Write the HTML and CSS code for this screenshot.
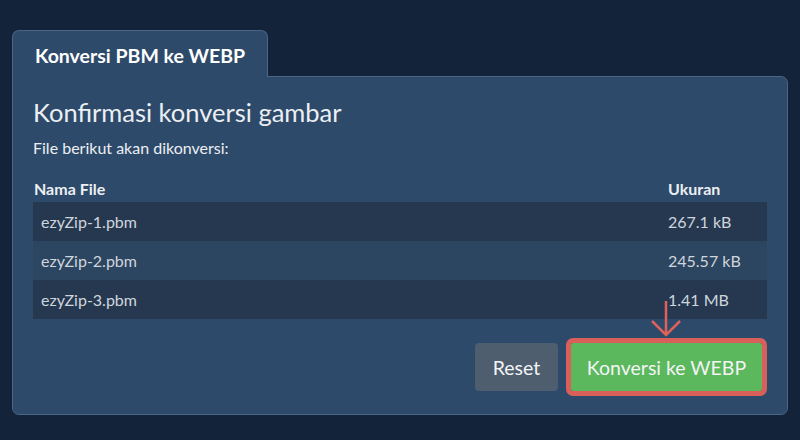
FILE: index.html
```html
<!DOCTYPE html>
<html lang="id">
<head>
<meta charset="utf-8">
<title>Konversi PBM ke WEBP</title>
<link rel="stylesheet" href="styles.css">
</head>
<body>
<div class="card">
  <div class="tabs">
    <div class="tab">Konversi PBM ke WEBP</div>
  </div>
  <div class="panel">
    <h1 class="title">Konfirmasi konversi gambar</h1>
    <p class="subtitle">File berikut akan dikonversi:</p>
    <table class="files">
      <thead>
        <tr><th class="name">Nama File</th><th class="size">Ukuran</th></tr>
      </thead>
      <tbody>
        <tr><td class="name">ezyZip-1.pbm</td><td class="size">267.1 kB</td></tr>
        <tr><td class="name">ezyZip-2.pbm</td><td class="size">245.57 kB</td></tr>
        <tr><td class="name">ezyZip-3.pbm</td><td class="size">1.41 MB</td></tr>
      </tbody>
    </table>
    <div class="actions">
      <button class="btn btn-reset">Reset</button>
      <button class="btn btn-convert">Konversi ke WEBP</button>
    </div>
    <svg class="pointer" width="32" height="38" viewBox="0 0 32 38">
      <path d="M16 1 V35 M2 21 L16 35 L30 21" fill="none" stroke="#e0605a" stroke-width="2.5"/>
    </svg>
  </div>
</div>
</body>
</html>
```
FILE: styles.css
```css
html, body {
  margin: 0;
  padding: 0;
}
body {
  background: #12233a;
  font-family: Lato, "Open Sans", sans-serif;
  color: #e8ecf0;
  width: 800px;
  height: 440px;
  overflow: hidden;
}
.card {
  padding: 30px 12px 0 12px;
}
.tabs {
  display: flex;
}
.tab {
  width: 256px;
  height: 47px;
  box-sizing: border-box;
  padding: 2px 0 0 22px;
  display: flex;
  align-items: center;
  font-size: 19.5px;
  font-weight: bold;
  color: #ffffff;
  background: #2d4a6a;
  border: 1px solid #4a6585;
  border-bottom: none;
  border-radius: 7px 7px 0 0;
  position: relative;
  z-index: 1;
  margin-bottom: -1px;
}
.panel {
  position: relative;
  background: #2d4a6a;
  border: 1px solid #4a6585;
  border-radius: 0 7px 7px 7px;
  padding: 20px 20px 23px 20px;
  height: 339px;
  box-sizing: border-box;
}
.title {
  margin: 0;
  font-size: 25.5px;
  font-weight: normal;
  line-height: 30px;
  color: #eceff2;
}
.subtitle {
  margin: 11px 0 0 0;
  font-size: 16px;
  line-height: 20px;
  color: #eceff2;
}
.files {
  margin-top: 16px;
  width: 100%;
  border-collapse: collapse;
}
.files th {
  text-align: left;
  font-size: 16px;
  font-weight: bold;
  color: #eceff2;
  height: 28px;
  padding: 0 0 0 1px;
  vertical-align: middle;
}
.files td {
  height: 39px;
  padding: 0 8px;
  font-size: 16px;
  color: #cfd5dd;
  vertical-align: middle;
}
.files th.size,
.files td.size {
  width: 91px;
}
.files th.size {
  padding-left: 1px;
  padding-right: 8px;
}
.files td.size {
  padding-left: 1px;
}
.files tbody tr:nth-child(odd) {
  background: #253850;
}
.files tbody tr:nth-child(even) {
  background: #2c4560;
}
.actions {
  display: flex;
  justify-content: flex-end;
  gap: 13px;
  margin-top: 24px;
  padding-right: 5px;
}
.btn {
  font-family: Lato, "Open Sans", sans-serif;
  font-size: 19.5px;
  color: #f2f4f6;
  border: none;
  border-radius: 4px;
  height: 48px;
  cursor: pointer;
}
.btn-reset {
  width: 83px;
  background: #4e5e6e;
}
.btn-convert {
  width: 191px;
  background: #5cb85c;
  outline: 5px solid #d9605a;
  border-radius: 2px;
}
.pointer {
  position: absolute;
  left: 637px;
  top: 223px;
}
```
